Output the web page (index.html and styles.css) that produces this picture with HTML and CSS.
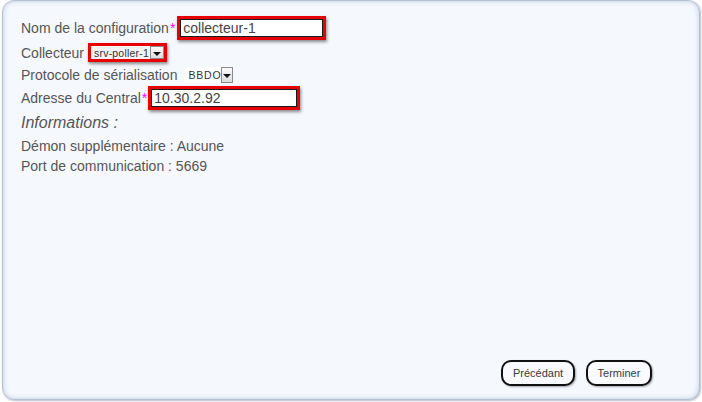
FILE: index.html
```html
<!DOCTYPE html>
<html lang="fr">
<head>
<meta charset="utf-8">
<title>Configuration</title>
<link rel="stylesheet" href="styles.css">
</head>
<body>
<div class="panel">
  <div class="form">
    <div class="row r1">
      <span class="label">Nom de la configuration<span class="req">*</span></span>
      <span class="hl hl-text w1"><span class="field">collecteur-1</span></span>
    </div>
    <div class="row r2">
      <span class="label">Collecteur</span>
      <span class="hl hl-sel"><span class="sel sel1"><span class="sel-val">srv-poller-1</span><span class="arrow"></span></span></span>
    </div>
    <div class="row r3">
      <span class="label">Protocole de sérialisation</span>
      <span class="sel sel2"><span class="sel-val">BBDO</span><span class="arrow"></span></span>
    </div>
    <div class="row r4">
      <span class="label">Adresse du Central<span class="req">*</span></span>
      <span class="hl hl-text w4"><span class="field">10.30.2.92</span></span>
    </div>
    <div class="info-title">Informations :</div>
    <div class="info">Démon supplémentaire : Aucune</div>
    <div class="info">Port de communication : 5669</div>
  </div>
  <div class="footer">
    <button class="btn b-prev">Précédant</button>
    <button class="btn b-end">Terminer</button>
  </div>
</div>
</body>
</html>
```
FILE: styles.css
```css
html, body {
  margin: 0;
  padding: 0;
  background: #ffffff;
}
body {
  width: 702px;
  height: 402px;
  font-family: "Liberation Sans", Arial, sans-serif;
  color: #555555;
}
.panel {
  box-sizing: border-box;
  margin: 0 2px 0 2px;
  width: 698px;
  height: 400px;
  border: 1px solid #b4c1d1;
  border-radius: 12px;
  background: #f5f9fe;
  box-shadow: inset 0 0 5px rgba(130, 150, 180, 0.5), 1px 1px 2px rgba(120, 130, 150, 0.5);
  display: flex;
  flex-direction: column;
  padding: 15px 0 0 18px;
}
.form {
  display: flex;
  flex-direction: column;
}
.row {
  display: flex;
  align-items: center;
  font-size: 14px;
  white-space: nowrap;
}
.label {
  color: #555555;
}
.req {
  color: #ff00ff;
  margin-left: 1px;
}
.r1 { height: 24px; }
.r2 { height: 19px; margin-top: 3px; }
.r3 { height: 16px; margin-top: 5px; }
.r4 { height: 24px; margin-top: 3px; }

.hl {
  box-sizing: border-box;
  border: 3px solid #e60000;
  box-shadow: 1px 2px 3px rgba(0, 0, 0, 0.45);
  display: flex;
}
.hl-text {
  height: 24px;
  margin-left: 2px;
}
.w1 { width: 149px; }
.w4 { width: 152px; margin-left: 1px; }
.field {
  flex: 1;
  box-sizing: border-box;
  border: 1px solid #1a1a1a;
  background: #ffffff;
  font-size: 14px;
  line-height: 16px;
  padding: 0 2px;
  color: #444444;
}
.hl-sel {
  height: 19px;
  margin-left: 4px;
}
.sel {
  display: flex;
  align-items: stretch;
  box-sizing: border-box;
  font-size: 10.5px;
  color: #333333;
}
.sel1 {
  width: 73px;
  height: 13px;
  background: #f3f3f3;
}
.sel2 {
  margin-left: 7px;
  width: 49px;
  height: 16px;
  background: #ffffff;
}
.sel-val {
  flex: 1;
  padding-left: 3px;
  display: flex;
  align-items: center;
  letter-spacing: 0.2px;
}
.sel2 .sel-val {
  padding-left: 4px;
  letter-spacing: 0.8px;
}
.arrow {
  position: relative;
  box-sizing: border-box;
  width: 14px;
  border: 1px solid #8a8a8a;
  background: linear-gradient(#fbfbfb, #dcdcdc);
}
.sel2 .arrow { width: 16px; }
.arrow::after {
  content: "";
  position: absolute;
  left: 50%;
  top: 50%;
  margin-left: -4px;
  margin-top: -1px;
  border-left: 4px solid transparent;
  border-right: 4px solid transparent;
  border-top: 4px solid #111111;
}
.info-title {
  margin-top: 3px;
  font-size: 16px;
  line-height: 20px;
  font-style: italic;
}
.info {
  font-size: 14px;
  line-height: 20px;
}
.info-title + .info { margin-top: 3px; }

.footer {
  margin-top: auto;
  display: flex;
  justify-content: flex-end;
  gap: 11px;
  padding: 0 47px 13px 0;
}
.btn {
  box-sizing: border-box;
  height: 26px;
  border: 2px solid #111111;
  border-radius: 10px;
  background: #f8faff;
  font-family: "Liberation Sans", Arial, sans-serif;
  font-size: 11px;
  color: #3a3a3a;
  padding: 0;
  box-shadow: 1px 1px 2px rgba(0, 0, 0, 0.35);
}
.b-prev { width: 74px; }
.b-end { width: 66px; }
```
